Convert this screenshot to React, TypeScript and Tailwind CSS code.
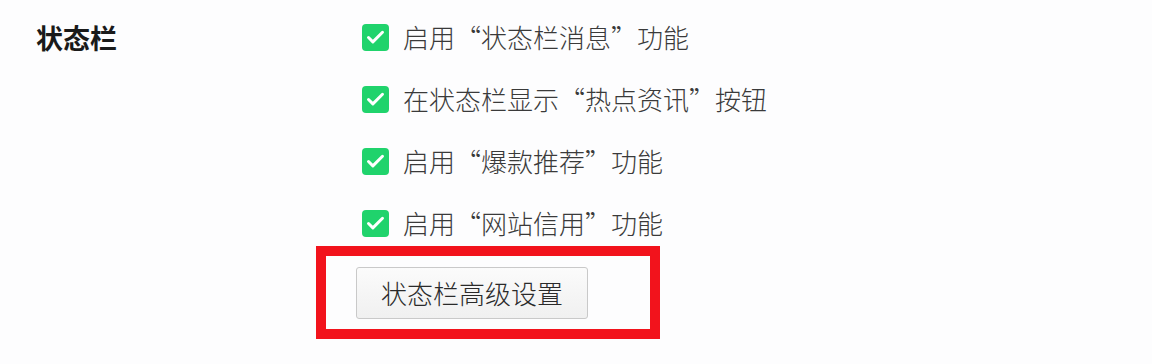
import { Check } from "lucide-react";

const OPTIONS = [
  "启用“状态栏消息”功能",
  "在状态栏显示“热点资讯”按钮",
  "启用“爆款推荐”功能",
  "启用“网站信用”功能",
];

const CJK = "font-['Noto_Sans_CJK_SC','Noto_Sans',sans-serif]";

function CheckRow({ label }: { label: string }) {
  return (
    <div className="flex h-[62px] items-center">
      <div className="grid h-[27px] w-[27px] shrink-0 place-items-center rounded-[4px] bg-[#20d36c]">
        <Check className="h-[21px] w-[21px] text-white" strokeWidth={3.4} />
      </div>
      <span className={`ml-[14px] text-[26px] font-light leading-none text-[#3a3a3a] ${CJK}`}>
        {label}
      </span>
    </div>
  );
}

export default function App() {
  return (
    <div className={`h-[364px] w-[1152px] overflow-hidden bg-[#fdfdfe] ${CJK}`}>
      <div className="flex pl-[36px] pt-[6px]">
        <div className="flex h-[62px] w-[326px] shrink-0 items-center">
          <span className="text-[27px] font-bold leading-none text-[#1a1a1a]">状态栏</span>
        </div>
        <div className="flex flex-col">
          {OPTIONS.map((o) => (
            <CheckRow key={o} label={o} />
          ))}
          <div className="-ml-[46px] -mt-[8px] h-[93px] w-[344px] border-[10px] border-[#f2131c] pl-[30px] pt-[11px]">
            <button className="flex h-[52px] w-[232px] items-center justify-center rounded-[3px] border border-[#c9c9c9] bg-gradient-to-b from-[#fbfbfb] to-[#f0f0f0] text-[26px] font-light leading-none text-[#2a2a2a]">
              状态栏高级设置
            </button>
          </div>
        </div>
      </div>
    </div>
  );
}
